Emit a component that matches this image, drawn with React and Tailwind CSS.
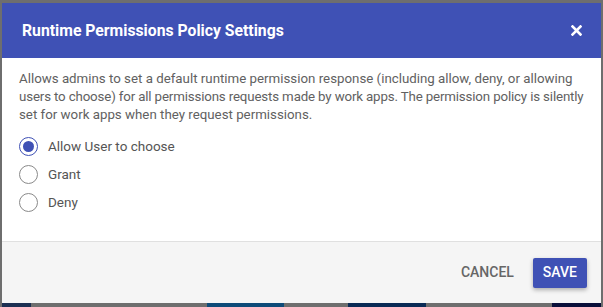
import { useState } from "react";

const options = [
  { id: "allow", label: "Allow User to choose" },
  { id: "grant", label: "Grant" },
  { id: "deny", label: "Deny" },
];

function Radio({ checked }) {
  return (
    <span
      className={`flex h-[19px] w-[19px] items-center justify-center rounded-full border-[1.5px] ${
        checked ? "border-[#3f51b5]" : "border-[#8a8a8a]"
      }`}
    >
      {checked && <span className="h-[11px] w-[11px] rounded-full bg-[#3f51b5]" />}
    </span>
  );
}

export default function App() {
  const [value, setValue] = useState("allow");

  return (
    <div
      className="flex h-[307px] w-[603px] flex-col bg-[#6e6e6e] px-[2px] pt-[3px]"
      style={{ fontFamily: "Roboto, 'Liberation Sans', sans-serif" }}
    >
      <div className="flex h-[300px] flex-col bg-white">
        <div className="flex h-[55px] items-center justify-between bg-[#3f51b5] pl-[20px] pr-[19px]">
          <h2 className="text-[15.75px] font-bold text-white">Runtime Permissions Policy Settings</h2>
          <button className="text-white">
            <svg width="11" height="11" viewBox="0 0 11 11">
              <path d="M1.5 1.5 L9.5 9.5 M9.5 1.5 L1.5 9.5" stroke="white" strokeWidth="2.6" strokeLinecap="square" />
            </svg>
          </button>
        </div>

        <div className="flex-1 pl-[17px] pr-[6px] pt-[12px]">
          <p className="whitespace-nowrap text-[13.3px] leading-[18px] text-[#616161]">
            Allows admins to set a default runtime permission response (including allow, deny, or allowing
            <br />
            <span className="tracking-[-0.15px]">
              users to choose) for all permissions requests made by work apps. The permission policy is silently
            </span>
            <br />
            set for work apps when they request permissions.
          </p>
          <div className="mt-[12px] flex flex-col gap-[8px]">
            {options.map((o) => (
              <label
                key={o.id}
                className="flex h-[20px] cursor-pointer items-center gap-[10px] text-[13.5px] text-[#555]"
                onClick={() => setValue(o.id)}
              >
                <Radio checked={value === o.id} />
                <span>{o.label}</span>
              </label>
            ))}
          </div>
        </div>

        <div className="flex h-[62px] items-center justify-end gap-[19px] border-t border-[#e0e0e0] bg-[#f5f5f5] pr-[14px]">
          <button className="text-[14px] font-medium text-[#666]">CANCEL</button>
          <button className="h-[30px] rounded-[2px] bg-[#3f51b5] px-[10px] text-[14px] font-medium text-white shadow-[0_2px_4px_rgba(0,0,0,0.3)]">
            SAVE
          </button>
        </div>
      </div>
      <div className="flex h-[4px]">
        <div className="w-[30px] bg-[#1c2f52]" />
        <div className="w-[180px] bg-[#6e6e6e]" />
        <div className="w-[80px] bg-[#0d4a78]" />
        <div className="w-[65px] bg-[#6e6e6e]" />
        <div className="w-[80px] bg-[#0a2a55]" />
        <div className="w-[130px] bg-[#6e6e6e]" />
        <div className="w-[50px] bg-[#0a0f3a]" />
      </div>
    </div>
  );
}
